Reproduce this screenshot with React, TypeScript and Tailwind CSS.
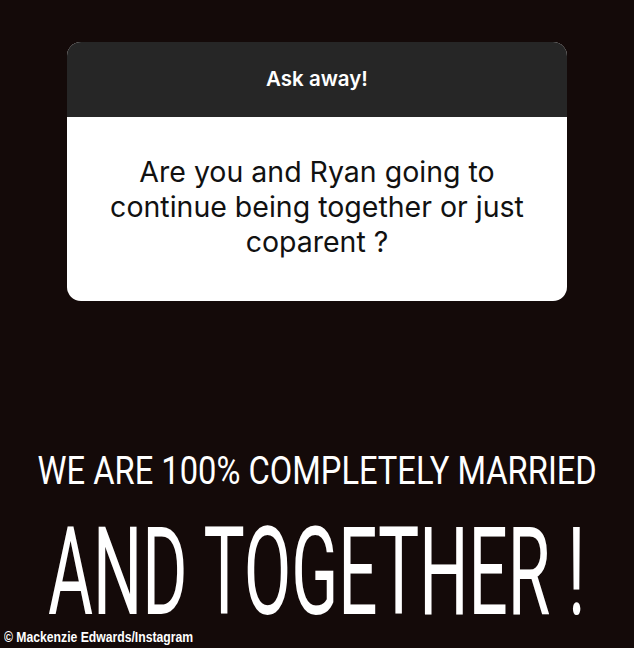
export default function App() {
  return (
    <div className="w-[634px] h-[648px] bg-[#140a09] flex flex-col relative overflow-hidden">
      <div className="mt-[42px] mx-[67px] w-[500px] h-[259px] rounded-[14px] overflow-hidden bg-white flex flex-col">
        <div className="h-[75px] bg-[#262626] flex items-center justify-center">
          <span className="text-white text-[20.5px] font-semibold" style={{ fontFamily: "Inter, sans-serif" }}>Ask away!</span>
        </div>
        <div className="flex-1 flex items-center justify-center px-[30px] pb-[5px]">
          <p className="text-center text-[#111] text-[28.5px] leading-[35px]" style={{ fontFamily: "Inter, sans-serif" }}>
            Are you and Ryan going to<br />continue being together or just<br />coparent ?
          </p>
        </div>
      </div>
      <div className="mt-[151px] flex justify-center">
        <span className="inline-block text-white text-[38px] leading-[38px] scale-x-[0.86] whitespace-nowrap" style={{ fontFamily: "Roboto, sans-serif" }}>WE ARE 100% COMPLETELY MARRIED</span>
      </div>
      <div className="mt-[38px] flex justify-center">
        <span className="inline-block text-white text-[122px] leading-[90px] scale-x-[0.566] whitespace-nowrap" style={{ fontFamily: "Roboto, sans-serif" }}>AND TOGETHER !</span>
      </div>
      <div className="absolute left-[4px] bottom-[3px] text-white text-[14px] font-bold leading-[16px] whitespace-nowrap origin-left scale-x-[0.87]" style={{ fontFamily: "'Liberation Sans', Arial, sans-serif" }}>
        © Mackenzie Edwards/Instagram
      </div>
    </div>
  );
}
